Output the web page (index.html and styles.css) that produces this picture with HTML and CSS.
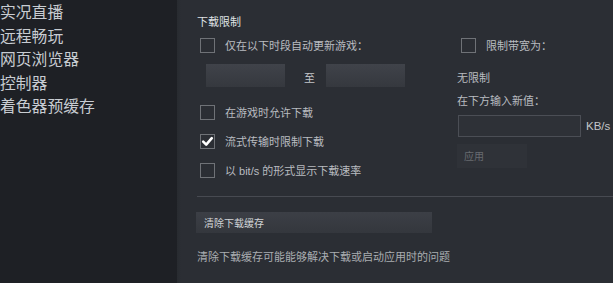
FILE: index.html
```html
<!DOCTYPE html>
<html lang="zh-CN">
<head>
<meta charset="utf-8">
<title>下载</title>
<link rel="stylesheet" href="styles.css">
</head>
<body>
<div class="app">
  <nav class="sidebar">
    <div class="nav-item">实况直播</div>
    <div class="nav-item">远程畅玩</div>
    <div class="nav-item">网页浏览器</div>
    <div class="nav-item">控制器</div>
    <div class="nav-item">着色器预缓存</div>
  </nav>
  <main class="content">
    <div class="section-title">下载限制</div>
    <div class="columns">
      <div class="col-left">
        <label class="check-row">
          <span class="box"></span>
          <span class="label">仅在以下时段自动更新游戏：</span>
        </label>
        <div class="time-row">
          <div class="time-input"></div>
          <span class="to">至</span>
          <div class="time-input"></div>
        </div>
        <label class="check-row gap-lg">
          <span class="box"></span>
          <span class="label">在游戏时允许下载</span>
        </label>
        <label class="check-row gap-sm">
          <span class="box checked">
            <svg viewBox="0 0 15 15" width="15" height="15"><path d="M3.2 7.6 L6.2 10.6 L11.8 4.2" fill="none" stroke="#ffffff" stroke-width="2.6" stroke-linecap="round" stroke-linejoin="round"/></svg>
          </span>
          <span class="label">流式传输时限制下载</span>
        </label>
        <label class="check-row gap-sm">
          <span class="box"></span>
          <span class="label">以 bit/s 的形式显示下载速率</span>
        </label>
      </div>
      <div class="col-right">
        <label class="check-row">
          <span class="box"></span>
          <span class="label">限制带宽为：</span>
        </label>
        <div class="plain unlimited">无限制</div>
        <div class="plain enter">在下方输入新值：</div>
        <div class="rate-row">
          <div class="rate-input"></div>
          <span class="unit">KB/s</span>
        </div>
        <div class="apply-btn">应用</div>
      </div>
    </div>
    <div class="separator"></div>
    <div class="clear-btn">清除下载缓存</div>
    <div class="desc">清除下载缓存可能能够解决下载或启动应用时的问题</div>
  </main>
</div>
</body>
</html>
```

FILE: styles.css
```css
html, body {
  margin: 0;
  padding: 0;
  height: 100%;
}
body {
  background: #2b2e34;
  font-family: "Liberation Sans", "Noto Sans CJK SC", sans-serif;
  overflow: hidden;
}
.app {
  display: flex;
  height: 283px;
}
.sidebar {
  width: 177px;
  flex: none;
  background: #1e2025;
  padding-top: 0;
}
.nav-item {
  font-family: "Noto Sans CJK SC", sans-serif;
  font-size: 15.8px;
  line-height: 23.5px;
  color: #c8ccd2;
  white-space: nowrap;
}
.content {
  flex: 1;
  padding-left: 19px;
  background: linear-gradient(to right, #282b30 0, #2b2e34 4px);
}
.section-title {
  margin-top: 14px;
  margin-left: 1px;
  font-family: "Noto Sans CJK SC", sans-serif;
  font-size: 11px;
  line-height: 14px;
  color: #dfe2e5;
}
.columns {
  display: grid;
  grid-template-columns: 261px 1fr;
  margin-top: 10px;
}
.col-left, .col-right {
  display: flex;
  flex-direction: column;
  align-items: flex-start;
}
.check-row {
  display: flex;
  align-items: center;
  height: 15px;
  margin-left: 4px;
}
.gap-lg { margin-top: 18px; }
.gap-sm { margin-top: 14px; }
.box {
  width: 13px;
  height: 13px;
  border: 1px solid #6f7277;
  flex: none;
  position: relative;
}
.box svg {
  position: absolute;
  left: -1px;
  top: -1px;
}
.label {
  margin-left: 10px;
  font-family: "Liberation Sans", "Noto Sans CJK SC", sans-serif;
  font-size: 11px;
  line-height: 14px;
  color: #b9bcc0;
  white-space: nowrap;
}
.time-row {
  display: flex;
  align-items: center;
  margin-top: 11px;
  margin-left: 10px;
}
.time-input {
  width: 79px;
  height: 23px;
  background: linear-gradient(to bottom, #40434a, #35383e);
}
.to {
  width: 41px;
  padding-left: 8px;
  box-sizing: border-box;
  text-align: center;
  font-family: "Noto Sans CJK SC", sans-serif;
  font-size: 11px;
  line-height: 14px;
  margin-top: 3px;
  color: #c2c5c8;
}
.plain {
  font-family: "Noto Sans CJK SC", sans-serif;
  font-size: 11px;
  line-height: 14px;
  color: #b9bcc0;
  white-space: nowrap;
}
.unlimited { margin-top: 17px; }
.enter { margin-top: 9px; }
.rate-row {
  display: flex;
  align-items: center;
  margin-top: 8px;
  margin-left: 1px;
}
.rate-input {
  width: 121px;
  height: 20px;
  border: 1px solid #4b4e55;
  background: #2e3137;
}
.unit {
  margin-left: 5px;
  font-size: 11.5px;
  color: #c3c6c9;
}
.apply-btn {
  margin-top: 7px;
  width: 63px;
  height: 24px;
  padding-left: 7px;
  background: #2f3238;
  font-family: "Noto Sans CJK SC", sans-serif;
  font-size: 10px;
  line-height: 24px;
  color: #686b70;
}
.separator {
  margin-top: 18px;
  margin-left: 1px;
  height: 1px;
  background: #474a51;
}
.clear-btn {
  margin-top: 15px;
  width: 228px;
  height: 21px;
  padding-left: 8px;
  background: linear-gradient(to bottom, #3c3f46, #34373d);
  font-family: "Noto Sans CJK SC", sans-serif;
  font-size: 10px;
  line-height: 21px;
  color: #d2d5d8;
}
.desc {
  margin-top: 16px;
  margin-left: 1px;
  font-family: "Noto Sans CJK SC", sans-serif;
  font-size: 11px;
  line-height: 14px;
  color: #a9adb1;
  white-space: nowrap;
}
```
